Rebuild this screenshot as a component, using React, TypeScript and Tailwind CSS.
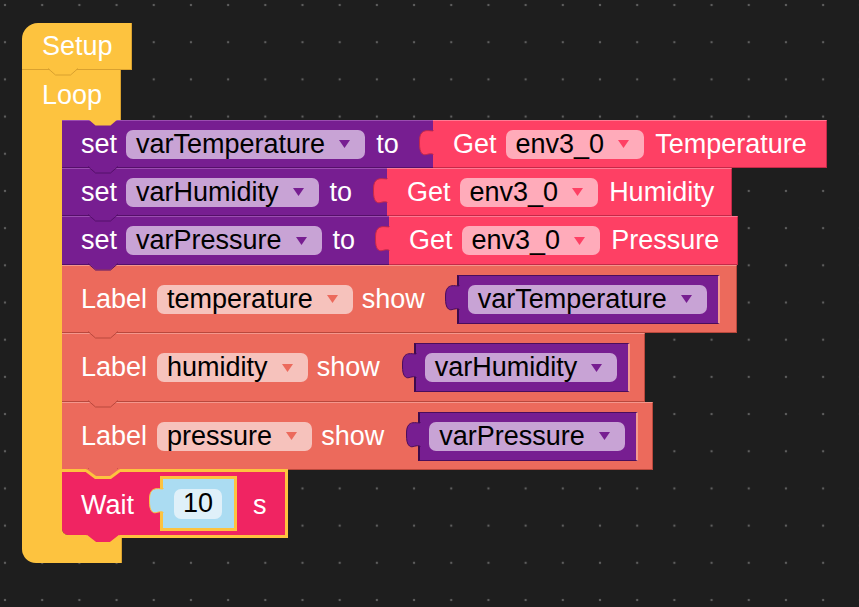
import React from 'react';

const Arrow = ({ color }: { color: string }) => (
  <svg width="11" height="8" viewBox="0 0 11 8" className="shrink-0">
    <path d="M0 0h11L5.5 8z" fill={color} />
  </svg>
);

// bottom "next" connector that sticks down into the block below
const Notch = ({ fill, edge }: { fill: string; edge: string }) => (
  <svg
    width="30"
    height="8"
    viewBox="0 0 30 8"
    className="absolute left-[26px] top-full -mt-px z-10"
  >
    <polygon points="0,0 7.5,6.5 22.5,6.5 30,0" fill={fill} />
    <polyline points="0,0.5 7.5,7 22.5,7 30,0.5" fill="none" stroke={edge} strokeWidth="1" />
  </svg>
);

// output connector on the left side of reporter blocks
const Tab = ({ fill, edge }: { fill: string; edge: string }) => (
  <svg width="15" height="28" viewBox="0 0 15 28" className="absolute left-[-14px] top-[9px] z-10">
    <path
      d="M15,1 C11,1 6,-0.5 3,2.5 C0.5,5 0.5,9 0.5,13 C0.5,18 1,22 3.5,24 C6.5,26.5 10,22 15,24.5 Z"
      fill={fill}
      stroke={edge}
      strokeWidth="1"
    />
    <path d="M15,1 V24.5" stroke={fill} strokeWidth="2" />
  </svg>
);

type PillProps = { text: string; bg: string; arrow: string; className?: string };

const Pill = ({ text, bg, arrow, className = '' }: PillProps) => (
  <div className={`flex items-center h-[29px] rounded-[7px] pl-[10px] pr-[15px] ${bg} ${className}`}>
    <span className="text-black leading-none">{text}</span>
    <span className="ml-[14px] flex items-center">
      <Arrow color={arrow} />
    </span>
  </div>
);

type SetRowProps = {
  name: string;
  prop: string;
  h: string;
  left: string;
  right: string;
};

const SetRow = ({ name, prop, h, left, right }: SetRowProps) => (
  <div className={`flex ${h}`}>
    <div className={`relative flex items-center ${left} bg-[#771e91] border-t border-t-[#9a4db0] border-b border-b-[#55106a] pl-[19px]`}>
      <span>set</span>
      <Pill text={name} bg="bg-[#c8a3d5]" arrow="#771e91" className="ml-[9px]" />
      <span className="ml-[11px]">to</span>
      <Notch fill="#771e91" edge="#55106a" />
    </div>
    <div className={`relative flex items-center ${right} bg-[#fe4064] border-t border-t-[#ff7a93] border-b border-b-[#c42a48] border-r border-r-[#c42a48] pl-[20px]`}>
      <Tab fill="#fe4064" edge="#c42a48" />
      <span>Get</span>
      <Pill text="env3_0" bg="bg-[#ffabba]" arrow="#fe4064" className="ml-[9px]" />
      <span className="ml-[11px]">{prop}</span>
    </div>
  </div>
);

type LabelRowProps = { label: string; variable: string; h: string; w: string; gap: string };

const LabelRow = ({ label, variable, h, w, gap }: LabelRowProps) => (
  <div className={`relative flex items-center ${h} ${w} bg-[#ec6a5c] border-t border-t-[#f4978c] border-b border-b-[#b9483c] border-r border-r-[#b9483c] pl-[19px]`}>
    <span>Label</span>
    <Pill text={label} bg="bg-[#f6c2bc]" arrow="#ec6a5c" className="ml-[10px]" />
    <span className="ml-[9px]">show</span>
    <div className={`relative flex items-center h-[49px] ${gap} pl-[9px] pr-[11px] bg-[#771e91] border-t border-t-[#4a0d5c] border-l-2 border-l-[#3d0a4c] border-b border-b-[#4a0d5c] border-r-2 border-r-[#f39a8f]`}>
      <Tab fill="#771e91" edge="#4a0d5c" />
      <Pill text={variable} bg="bg-[#c8a3d5]" arrow="#771e91" />
    </div>
    <Notch fill="#ec6a5c" edge="#b9483c" />
  </div>
);

const App: React.FC = () => {
  return (
    <div className="w-[859px] h-[607px] overflow-hidden bg-[#1e1e1e] bg-[radial-gradient(circle,#5e5e5e_1px,transparent_1.6px)] bg-[length:37.2px_37.2px] bg-[position:-13.6px_-13.6px] pt-[23px] pl-[22px] font-['Liberation_Sans',Arial,sans-serif] text-[27px] text-white leading-none">
      {/* Setup hat */}
      <div className="relative flex items-center w-[110px] h-[47px] bg-[#fdc33f] rounded-tl-[16px] border-r border-r-[#d9a12f] border-b border-b-[#d9a12f] pl-[20px]">
        <span>Setup</span>
        <Notch fill="#fdc33f" edge="#d9a12f" />
      </div>

      {/* Loop C-block */}
      <div className="flex flex-col">
        <div className="relative flex items-center w-[99px] h-[50px] bg-[#fdc33f] border-r border-r-[#d9a12f] pl-[20px]">
          <span>Loop</span>
          <svg width="30" height="8" viewBox="0 0 30 8" className="absolute left-[66px] top-full -mt-px z-10">
            <polygon points="0,0 7.5,6.5 22.5,6.5 30,0" fill="#fdc33f" />
          </svg>
        </div>
        <div className="flex">
          <div className="w-[40px] bg-[#fdc33f]" />
          <div className="flex flex-col">
            <SetRow name="varTemperature" prop="Temperature" h="h-[48px]" left="w-[371px]" right="w-[394px]" />
            <SetRow name="varHumidity" prop="Humidity" h="h-[48px]" left="w-[325px]" right="w-[345px]" />
            <SetRow name="varPressure" prop="Pressure" h="h-[49px]" left="w-[327px]" right="w-[349px]" />
            <LabelRow label="temperature" variable="varTemperature" h="h-[68px]" w="w-[675px]" gap="ml-[32px]" />
            <LabelRow label="humidity" variable="varHumidity" h="h-[69px]" w="w-[583px]" gap="ml-[34px]" />
            <LabelRow label="pressure" variable="varPressure" h="h-[68px]" w="w-[591px]" gap="ml-[34px]" />

            {/* Wait block, selected */}
            <div className="relative flex items-center mt-[2px] h-[63px] w-[223px] bg-[#f02462] outline-[3px] outline-solid outline-[#fdc33f] rounded-bl-[6px] pl-[19px] z-20">
              <svg width="34" height="10" viewBox="0 0 34 10" className="absolute left-[24px] top-[-3px]">
                <polygon points="0,0 9.5,8 24.5,8 34,0" fill="#ec6a5c" />
                <polyline points="0,1.5 9.5,8.5 24.5,8.5 34,1.5" fill="none" stroke="#fdc33f" strokeWidth="3" />
              </svg>
              <span className="pt-[3px]">Wait</span>
              <div className="relative flex items-center ml-[29px] h-[49px] w-[71px] bg-[#abdcf2] outline-[3px] outline-solid outline-[#fdc33f] pl-[11px]">
                <Tab fill="#abdcf2" edge="#fdc33f" />
                <div className="flex items-center justify-center h-[30px] w-[48px] rounded-[7px] bg-[#dff0f9] text-black">
                  10
                </div>
              </div>
              <span className="ml-[19px] pt-[3px]">s</span>
              <svg width="34" height="11" viewBox="0 0 34 11" className="absolute left-[24px] top-full">
                <polygon points="0,0 9.5,7.5 24.5,7.5 34,0" fill="#f02462" />
                <polyline points="0,1 9.5,8.5 24.5,8.5 34,1" fill="none" stroke="#fdc33f" strokeWidth="3" />
              </svg>
            </div>
          </div>
        </div>
        <div className="w-[100px] h-[28px] bg-[#fdc33f] rounded-bl-[14px] border-r border-r-[#d9a12f]" />
      </div>
    </div>
  );
};

export default App;
